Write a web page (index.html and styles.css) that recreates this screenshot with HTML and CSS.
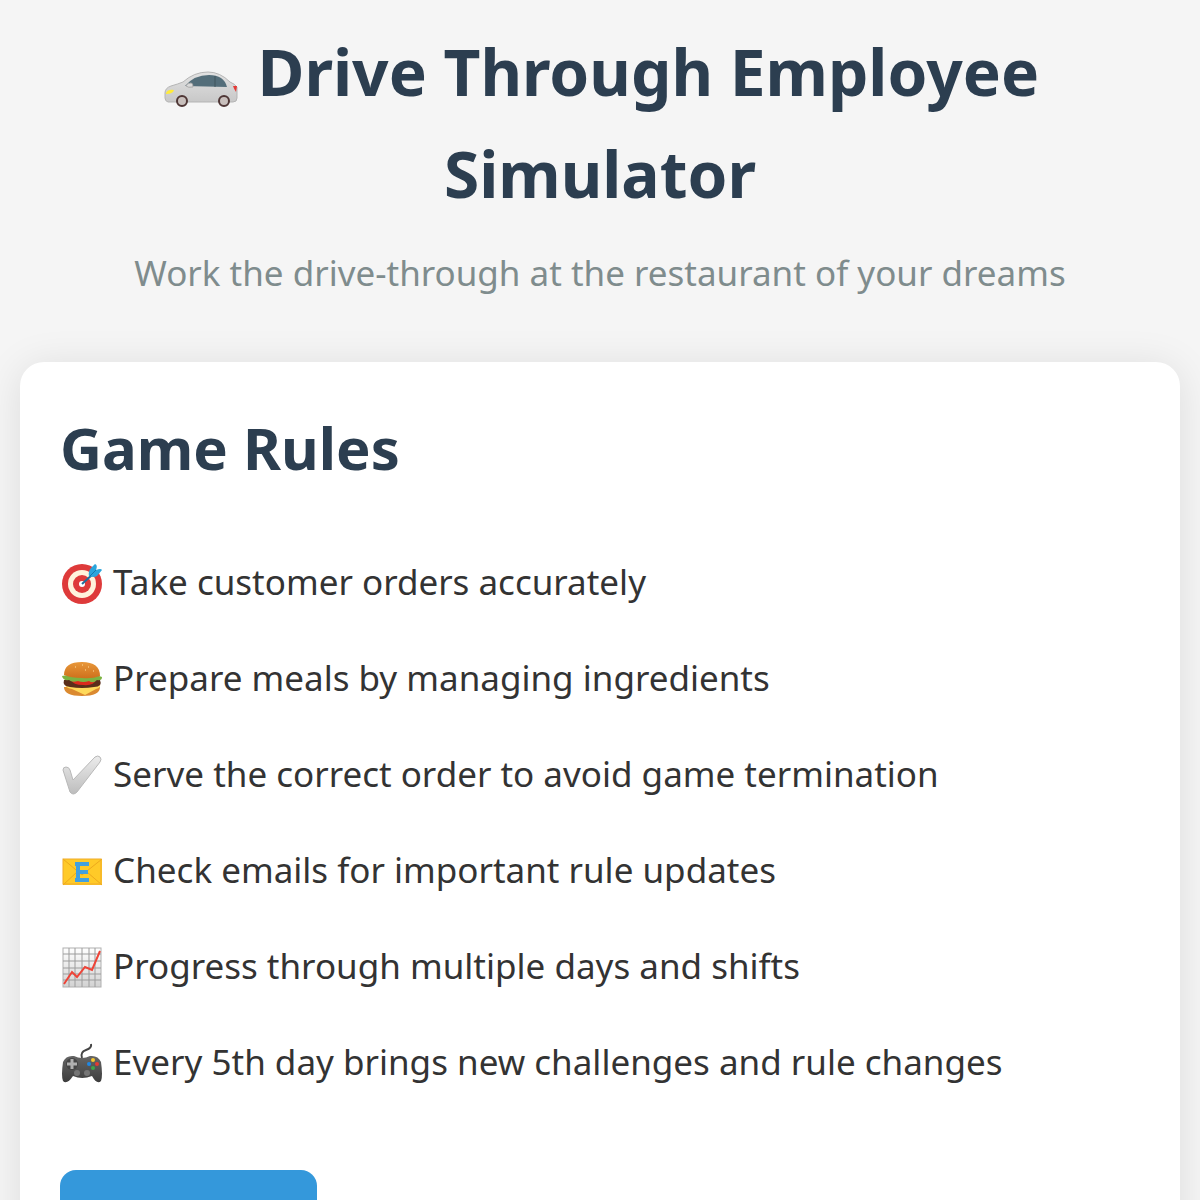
FILE: index.html
```html
<!DOCTYPE html>
<html lang="en">
<head>
  <meta charset="UTF-8">
  <meta name="viewport" content="width=device-width, initial-scale=1.0">
  <title>Drive Through Employee Simulator</title>
  <link rel="stylesheet" href="styles.css">
</head>
<body>
  <!-- Shared gradients for the icons -->
  <svg class="defs" width="0" height="0" aria-hidden="true">
    <defs>
      <linearGradient id="car-body" x1="0" y1="0" x2="0" y2="1">
        <stop offset="0" stop-color="#e2e2e2"/>
        <stop offset="1" stop-color="#c8c8c8"/>
      </linearGradient>
      <linearGradient id="bun" x1="0" y1="0" x2="0" y2="1">
        <stop offset="0" stop-color="#e8983a"/>
        <stop offset="1" stop-color="#cf701c"/>
      </linearGradient>
      <linearGradient id="silver" x1="0" y1="0" x2="0" y2="1">
        <stop offset="0" stop-color="#ececec"/>
        <stop offset="1" stop-color="#bdbdbd"/>
      </linearGradient>
      <linearGradient id="paper" x1="0" y1="0" x2="0" y2="1">
        <stop offset="0" stop-color="#ffffff"/>
        <stop offset="1" stop-color="#d2d2d2"/>
      </linearGradient>
      <linearGradient id="pad" x1="0" y1="0" x2="0" y2="1">
        <stop offset="0" stop-color="#666666"/>
        <stop offset="1" stop-color="#3d3d3d"/>
      </linearGradient>
    </defs>
  </svg>

  <div class="container">
    <header>
      <h1>
        <svg class="car" viewBox="0 0 80 54" aria-hidden="true">
          <path d="M7 43 Q4 42 4 39 V34 Q4 29 10 27 Q17 25 22 23 Q33 13 47 13 Q59 13 69 23 Q74 25 76 28 V39 Q76 43 72 43 Z" fill="url(#car-body)" stroke="#b5b5b5" stroke-width="1"/>
          <path d="M24 27 Q33 16 48 16 Q63 16 66 28 Z" fill="#546e7a"/>
          <path d="M54 17 V28" stroke="#3f555d" stroke-width="1"/>
          <path d="M25 27 Q26 24 30 24 Q32 24 32 28 Q27 29 25 27 Z" fill="#dadada" stroke="#aaaaaa"/>
          <path d="M5 34 Q7 30 13 31 Q12 35 5 35 Z" fill="#ffeb3b"/>
          <path d="M72 27 L76 27 L75 33 Q73 30 72 27 Z" fill="#e53935"/>
          <circle cx="21" cy="42" r="5" fill="#c8bfbc" stroke="#4e3635" stroke-width="2"/>
          <circle cx="63" cy="42" r="5" fill="#c8bfbc" stroke="#4e3635" stroke-width="2"/>
        </svg>
        Drive Through Employee Simulator
      </h1>
      <p class="subtitle">Work the drive-through at the restaurant of your dreams</p>
    </header>

    <main class="card">
      <h2>Game Rules</h2>
      <ul class="rules">
        <li>
          <svg class="icon" viewBox="0 0 44 44" aria-hidden="true">
            <circle cx="22" cy="24" r="20" fill="#de3a3a"/>
            <circle cx="22" cy="24" r="14" fill="#fff3dc"/>
            <circle cx="22" cy="24" r="9" fill="#de3a3a"/>
            <circle cx="22" cy="24" r="3" fill="#ffffff"/>
            <path d="M22 24 L33 14" stroke="#1d6f9e" stroke-width="2"/>
            <path d="M29 16 Q28 11 31 8 L35 4 Q38 5 36 10 Q41 8 42 10 L37 16 Q34 18 29 16 Z" fill="#2aa5dc"/>
            <path d="M30 16 L36 10" stroke="#1478ad" stroke-width="1"/>
          </svg>
          Take customer orders accurately
        </li>
        <li>
          <svg class="icon" viewBox="0 0 44 44" aria-hidden="true">
            <path d="M4 31 Q4 40 22 40 Q40 40 40 31 Z" fill="#db8a30"/>
            <path d="M5 28 H40 Q41 32 36 33 L25 39 L12 33 Q5 32 5 28 Z" fill="#ffd95a"/>
            <path d="M4 24 H40 Q43 31 34 31 Q22 33 10 31 Q2 30 4 24 Z" fill="#5a2e1b"/>
            <path d="M11 24 H36 Q34 30 23 29 Q13 29 11 24 Z" fill="#dc2a1c"/>
            <path d="M2 20 Q10 18 22 19 Q35 18 42 21 Q42 25 37 24 Q33 28 29 25 Q23 27 18 25 Q12 27 9 24 Q3 25 2 20 Z" fill="#7cb342"/>
            <path d="M4 19 Q4 6 22 6 Q40 6 40 20 Q32 23 22 22 Q11 22 4 19 Z" fill="url(#bun)"/>
            <path d="M15 11 h1 M22 9 h1 M28 11 h1 M33 15 h1 M25 14 h1" stroke="#ffe0a0" stroke-width="1"/>
          </svg>
          Prepare meals by managing ingredients
        </li>
        <li>
          <svg class="icon" viewBox="0 0 44 44" aria-hidden="true">
            <path d="M3 18 Q3 15 6 15 Q9 15 10 18 L13 28 L35 5 Q38 3 40 5 Q42 7 40 10 L17 40 Q13 44 10 40 Z" fill="url(#silver)" stroke="#b8b8b8" stroke-width="1"/>
          </svg>
          Serve the correct order to avoid game termination
        </li>
        <li>
          <svg class="icon" viewBox="0 0 44 44" aria-hidden="true">
            <rect x="3" y="11" width="39" height="26" fill="#ffca28"/>
            <path d="M3 11 L22 27 L42 11 M3 37 L17 24 M42 37 L27 24" fill="none" stroke="#eda91c" stroke-width="1"/>
            <rect x="3" y="11" width="38" height="25" fill="none" stroke="#f0ab2a" stroke-width="1"/>
            <path d="M15 16 H29 M18 14 V34 M15 32 H29 M18 24 H28" fill="none" stroke="#42a0df" stroke-width="4"/>
          </svg>
          Check emails for important rule updates
        </li>
        <li>
          <svg class="icon" viewBox="0 0 44 44" aria-hidden="true">
            <rect x="3" y="4" width="38" height="39" fill="url(#paper)" stroke="#b0b0b0"/>
            <path d="M9 4 V43 M15 4 V43 M22 4 V43 M29 4 V43 M35 4 V43 M3 10 H41 M3 17 H41 M3 24 H41 M3 30 H41 M3 36 H41" stroke="#9c9c9c" stroke-width="1"/>
            <path d="M4 40 L12 28 L17 33 L25 23 L32 26 L40 7" fill="none" stroke="#ee4438" stroke-width="2"/>
          </svg>
          Progress through multiple days and shifts
        </li>
        <li>
          <svg class="icon" viewBox="0 0 44 44" aria-hidden="true">
            <path d="M22 18 Q20 12 26 10 Q32 8 31 4" fill="none" stroke="#454545" stroke-width="2"/>
            <path d="M3 22 Q6 15 14 16 Q18 18 22 18 Q26 18 30 16 Q38 15 41 22 Q43 36 41 41 Q37 45 32 36 Q22 40 13 36 Q7 45 3 41 Q1 36 3 22 Z" fill="url(#pad)"/>
            <circle cx="12" cy="24" r="6" fill="#454545"/>
            <path d="M12 19 V29 M7 24 H17" stroke="#b0b0b0" stroke-width="3"/>
            <circle cx="17" cy="33" r="3" fill="#757575"/>
            <circle cx="27" cy="33" r="3" fill="#757575"/>
            <circle cx="33" cy="20" r="2" fill="#f5c52e"/>
            <circle cx="29" cy="24" r="2" fill="#1e88e5"/>
            <circle cx="37" cy="24" r="2" fill="#e33a32"/>
            <circle cx="33" cy="28" r="2" fill="#3da648"/>
          </svg>
          Every 5th day brings new challenges and rule changes
        </li>
      </ul>
      <button type="button" class="start-btn">Start Game</button>
    </main>
  </div>
</body>
</html>
```
FILE: styles.css
```css
* {
  margin: 0;
  padding: 0;
  box-sizing: border-box;
}
body {
  font-family: "Noto Sans", sans-serif;
  font-size: 35px;
  line-height: 56px;
  background-color: #f5f5f5;
  color: #333;
}
.defs {
  display: block;
}
.container {
  padding: 21px 20px;
}
header {
  text-align: center;
  margin-bottom: 61px;
}
h1 {
  font-size: 64px;
  line-height: 102px;
  color: #2c3e50;
  margin-bottom: 20px;
}
.car {
  width: 80px;
  height: 54px;
  vertical-align: bottom;
  margin-bottom: 10px;
}
.subtitle {
  color: #7f8c8d;
}
.card {
  background: white;
  border-radius: 24px;
  padding: 40px;
  box-shadow: 0 4px 40px rgba(0, 0, 0, 0.1);
}
h2 {
  font-size: 58px;
  line-height: 92px;
  color: #2c3e50;
  margin-bottom: 40px;
}
.rules {
  list-style: none;
  margin-bottom: 60px;
}
.rules li {
  padding: 20px 0;
}
.icon {
  width: 44px;
  height: 44px;
  vertical-align: bottom;
  margin-bottom: 6px;
}
.start-btn {
  font-family: inherit;
  font-size: 32px;
  line-height: 52px;
  padding: 30px 44px;
  border: none;
  border-radius: 16px;
  background: #3498db;
  color: white;
  cursor: pointer;
}
```
